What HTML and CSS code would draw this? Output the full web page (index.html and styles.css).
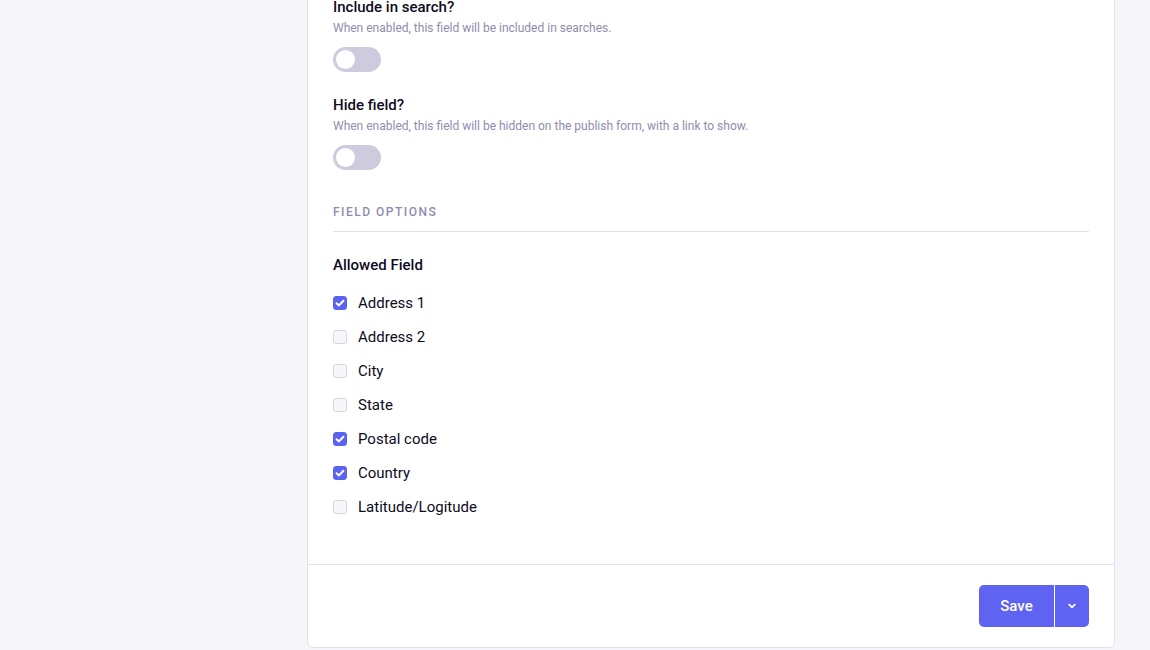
FILE: index.html
```html
<!DOCTYPE html>
<html lang="en">
<head>
<meta charset="utf-8">
<title>Field settings</title>
<link rel="stylesheet" href="styles.css">
</head>
<body>
<div class="page">
  <div class="card">
    <div class="card-body">
      <div class="field">
        <div class="field-label">Include in search?</div>
        <div class="field-desc">When enabled, this field will be included in searches.</div>
        <div class="toggle"><span class="knob"></span></div>
      </div>
      <div class="field field-next">
        <div class="field-label">Hide field?</div>
        <div class="field-desc">When enabled, this field will be hidden on the publish form, with a link to show.</div>
        <div class="toggle"><span class="knob"></span></div>
      </div>
      <div class="section-title">FIELD OPTIONS</div>
      <div class="group-label">Allowed Field</div>
      <ul class="checks">
        <li class="check-row"><span class="box checked"><svg viewBox="0 0 14 14" width="14" height="14"><path d="M3.6 7.2 L6 9.4 L10.4 4.8" fill="none" stroke="#fff" stroke-width="2" stroke-linecap="round" stroke-linejoin="round"/></svg></span>Address 1</li>
        <li class="check-row"><span class="box"></span>Address 2</li>
        <li class="check-row"><span class="box"></span>City</li>
        <li class="check-row"><span class="box"></span>State</li>
        <li class="check-row"><span class="box checked"><svg viewBox="0 0 14 14" width="14" height="14"><path d="M3.6 7.2 L6 9.4 L10.4 4.8" fill="none" stroke="#fff" stroke-width="2" stroke-linecap="round" stroke-linejoin="round"/></svg></span>Postal code</li>
        <li class="check-row"><span class="box checked"><svg viewBox="0 0 14 14" width="14" height="14"><path d="M3.6 7.2 L6 9.4 L10.4 4.8" fill="none" stroke="#fff" stroke-width="2" stroke-linecap="round" stroke-linejoin="round"/></svg></span>Country</li>
        <li class="check-row"><span class="box"></span>Latitude/Logitude</li>
      </ul>
    </div>
    <div class="card-footer">
      <div class="btn-group">
        <button class="btn btn-main">Save</button>
        <button class="btn btn-drop"><svg viewBox="0 0 10 10" width="10" height="10"><path d="M2.2 3.6 L5 6.3 L7.8 3.6" fill="none" stroke="#fff" stroke-width="1.8" stroke-linecap="round" stroke-linejoin="round"/></svg></button>
      </div>
    </div>
  </div>
</div>
</body>
</html>
```

FILE: styles.css
```css
html, body {
  margin: 0;
  padding: 0;
  background: #f6f6fa;
  font-family: Roboto, "Liberation Sans", Arial, sans-serif;
  color: #0d0c22;
  height: 650px;
  overflow: hidden;
}

.page {
  padding-left: 307px;
}

.card {
  width: 806px;
  margin-top: -13px;
  background: #fff;
  border: 1px solid #e2e1ee;
  border-radius: 6px;
}

.card-body {
  padding: 9px 25px 40px 25px;
}

.field-label {
  font-size: 15px;
  font-weight: 500;
  line-height: 20px;
  color: #0d0c22;
}

.field-desc {
  margin-top: 2px;
  font-size: 12px;
  line-height: 18px;
  color: #8f8cae;
}

.field-next {
  margin-top: 23px;
}

.toggle {
  margin-top: 10px;
  width: 48px;
  height: 25px;
  border-radius: 13px;
  background: #cdcbdd;
  display: flex;
  align-items: center;
  padding-left: 3px;
  box-sizing: border-box;
}

.knob {
  width: 19px;
  height: 19px;
  border-radius: 50%;
  background: #fff;
}

.section-title {
  margin-top: 34px;
  font-size: 12px;
  line-height: 16px;
  font-weight: 500;
  letter-spacing: 1.5px;
  color: #8f8cae;
  padding-bottom: 11px;
  border-bottom: 1px solid #e2e1ee;
}

.group-label {
  margin-top: 23px;
  font-size: 15px;
  font-weight: 500;
  line-height: 20px;
}

.checks {
  list-style: none;
  margin: 11px 0 0 0;
  padding: 0;
}

.check-row {
  height: 34px;
  display: flex;
  align-items: center;
  gap: 11px;
  font-size: 15px;
  color: #0d0c22;
}

.box {
  width: 14px;
  height: 14px;
  box-sizing: border-box;
  border: 1px solid #d6d5e4;
  border-radius: 3px;
  background: #f7f7fb;
  display: flex;
  align-items: center;
  justify-content: center;
  flex: none;
}

.box.checked {
  background: #5d63f1;
  border-color: #5d63f1;
}

.box svg {
  display: block;
  flex: none;
}

.card-footer {
  border-top: 1px solid #e2e1ee;
  padding: 20px 25px 20px 25px;
  display: flex;
  justify-content: flex-end;
}

.btn-group {
  display: flex;
  border-radius: 5px;
  overflow: hidden;
  height: 42px;
}

.btn {
  border: 0;
  margin: 0;
  background: #5e63f1;
  color: #fff;
  font-family: Roboto, "Liberation Sans", Arial, sans-serif;
  font-size: 15px;
  font-weight: 500;
  display: flex;
  align-items: center;
  justify-content: center;
  padding: 0;
}

.btn-main {
  width: 75px;
}

.btn-drop {
  width: 35px;
  border-left: 1px solid #fff;
}
```
